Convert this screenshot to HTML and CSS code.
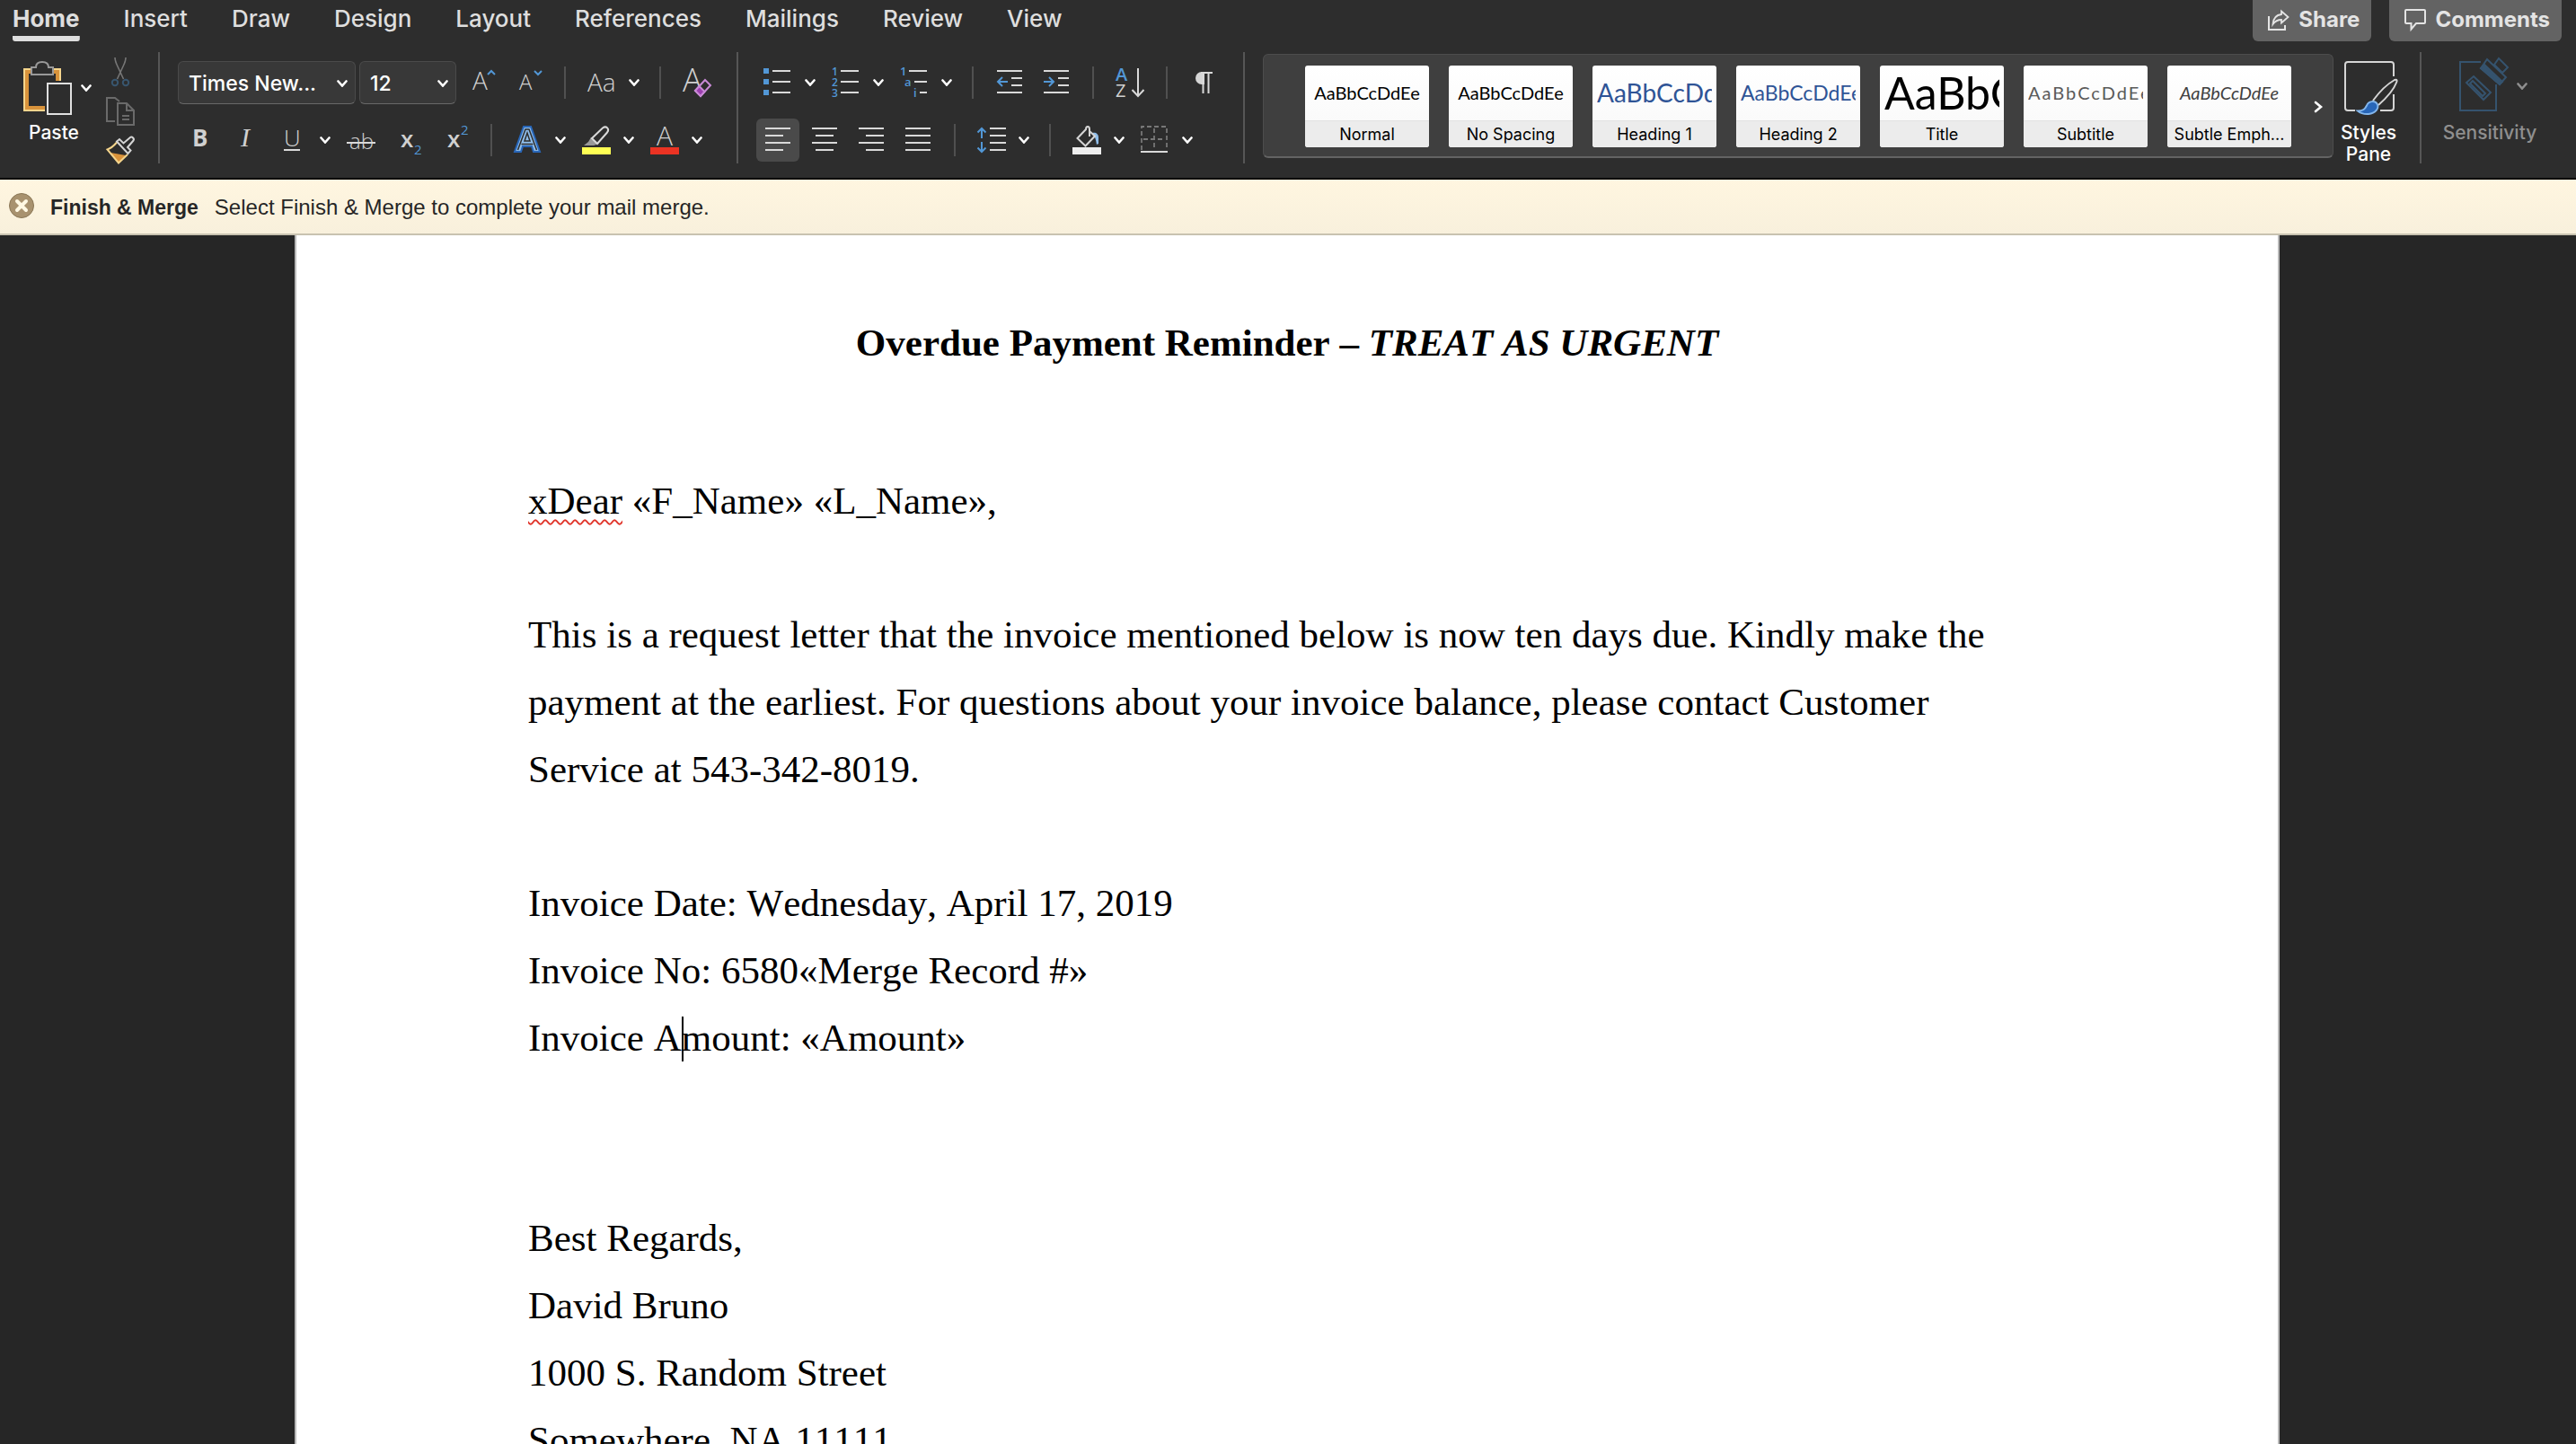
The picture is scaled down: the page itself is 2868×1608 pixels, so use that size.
FILE: index.html
```html
<!DOCTYPE html>
<html lang="en">
<head>
<meta charset="utf-8">
<title>Overdue Payment Reminder</title>
<link rel="stylesheet" href="styles.css">
</head>
<body>
<svg class="defs" aria-hidden="true">
  <symbol id="chev" viewBox="0 0 12 8"><path d="M1.500 1.500 6 6.500l4.500-5" fill="none" stroke="currentColor" stroke-width="2.600" stroke-linecap="round"/></symbol>
</svg>

<header class="ribbon">
  <div class="topbar">
    <nav class="tabs" aria-label="Ribbon tabs">
      <a class="tab active" href="#home">Home</a>
      <a class="tab" href="#insert">Insert</a>
      <a class="tab" href="#draw">Draw</a>
      <a class="tab" href="#design">Design</a>
      <a class="tab" href="#layout">Layout</a>
      <a class="tab" href="#references">References</a>
      <a class="tab" href="#mailings">Mailings</a>
      <a class="tab" href="#review">Review</a>
      <a class="tab" href="#view">View</a>
    </nav>
    <div class="actions">
      <button class="action" type="button">
        <svg width="24" height="24" viewBox="0 0 24 24" fill="none" stroke="currentColor" stroke-width="2"><path d="M1 8v15h18v-5"/><path d="M15 2.500 22.500 9 15 15.500V12C10.500 12 8 13.500 5.500 17 6 10.500 9 6.500 15 6z" stroke-width="1.800"/></svg>
        Share
      </button>
      <button class="action" type="button">
        <svg width="24" height="24" viewBox="0 0 24 24" fill="none" stroke="currentColor" stroke-width="2"><path d="M2 1h20a1 1 0 0 1 1 1v13a1 1 0 0 1-1 1h-9l-5.500 6.500V16H2a1 1 0 0 1-1-1V2a1 1 0 0 1 1-1z"/></svg>
        Comments
      </button>
    </div>
  </div>

  <div class="tools">
    <section class="group clipboard" aria-label="Clipboard">
      <button class="big paste" type="button">
        <span class="big-icon">
          <svg width="54" height="60" viewBox="0 0 54 60" fill="none">
            <path d="M24 52H4V12h6M32 12h6v10" stroke="#d9933b" stroke-width="4"/>
            <path d="M24 55H1V9h8M33 9h8v13" stroke="#f5d58c" stroke-width="2"/>
            <path d="M9 15h24V7h-5c0-4-3-6-7-6s-7 2-7 6H9z" stroke="#999" stroke-width="2" fill="#2d2d2d"/>
            <path d="M27 25h26v34H27z" stroke="#e0e0e0" stroke-width="2" fill="#2d2d2d"/>
          </svg>
          <svg class="chev" width="12" height="8"><use href="#chev"/></svg>
        </span>
        <span class="paste-label">Paste</span>
      </button>
      <div class="stack">
        <button type="button" class="icon" aria-label="Cut"><svg width="32" height="32" viewBox="0 0 32 32" fill="none"><path d="M10 0c0 4 1 6 3 10l6.500 14M22 0c0 4-1 6-3 10l-6.500 14" stroke="#777" stroke-width="1.600"/><circle cx="10" cy="28" r="3.200" stroke="#38566f" stroke-width="2"/><circle cx="22" cy="28" r="3.200" stroke="#38566f" stroke-width="2"/></svg></button>
        <button type="button" class="icon" aria-label="Copy"><svg width="32" height="32" viewBox="0 0 32 32" fill="none" stroke="#6a6a6a" stroke-width="2"><path d="M10 27H1V1h9l5 4"/><path d="M13 7h10l8 8v16H13zM23 7v8h8M18 21h8M18 25h8"/></svg></button>
        <button type="button" class="icon" aria-label="Format painter"><svg width="32" height="30" viewBox="0 0 32 30" fill="none"><path d="m5 18 17 3-8 8z" fill="#d9933b"/><path d="M12 6.500C9 10 6 13 1.500 14.500L14 29.500l10-9.500" stroke="#f5d58c" stroke-width="2"/><path d="m12 5.500 3-2.500 4.500 4.500 7.500-6.500c2-1.500 5 1.500 3.500 3.500L24 12l3.500 3.500-3 3.500z" stroke="#d5d5d5" stroke-width="2"/></svg></button>
      </div>
    </section>
    <hr class="rule">

    <section class="group rows" aria-label="Font">
      <div class="row">
        <div class="selects">
          <div class="picker font-picker"><select aria-label="Font"><option>Times New...</option></select><svg class="chev" width="12" height="8"><use href="#chev"/></svg></div>
          <div class="picker size-picker"><select aria-label="Font size"><option>12</option></select><svg class="chev" width="12" height="8"><use href="#chev"/></svg></div>
        </div>
        <div class="cluster sizes">
          <button type="button" class="icon" aria-label="Increase font size"><svg width="26" height="32" viewBox="0 0 26 32"><text x="0" y="24" class="glyph light" font-size="28">A</text><path d="m17 7 4-4 4 4" class="blue-line"/></svg></button>
          <button type="button" class="icon" aria-label="Decrease font size"><svg width="26" height="32" viewBox="0 0 26 32"><text x="0" y="24" class="glyph light" font-size="24">A</text><path d="m17 3 4 4 4-4" class="blue-line"/></svg></button>
        </div>
        <hr class="tick">
        <div class="cluster">
          <button type="button" class="split" aria-label="Change case"><svg width="32" height="32" viewBox="0 0 32 32"><text x="0" y="26" class="glyph light" font-size="28">Aa</text></svg><svg class="chev" width="12" height="8"><use href="#chev"/></svg></button>
        </div>
        <hr class="tick">
        <div class="cluster">
          <button type="button" class="icon" aria-label="Clear formatting"><svg width="32" height="32" viewBox="0 0 32 32"><text x="0" y="26" class="glyph light" font-size="36">A</text><path d="m14 25 11-12 6 6-11 12z" fill="#2d2d2d" stroke="#c98ad6" stroke-width="2"/><path d="m14 25 4.500-5 6 6-4.500 5z" fill="#9c3fb0" stroke="#c98ad6" stroke-width="2"/></svg></button>
        </div>
      </div>
      <div class="row inset">
        <div class="cluster">
          <button type="button" class="icon" aria-label="Bold"><svg width="32" height="32" viewBox="0 0 32 32"><text x="8" y="23" class="glyph" font-size="26" font-weight="700">B</text></svg></button>
          <button type="button" class="icon" aria-label="Italic"><svg width="32" height="32" viewBox="0 0 32 32"><text x="10" y="23" class="glyph serif" font-size="30">I</text></svg></button>
          <button type="button" class="split" aria-label="Underline"><svg width="32" height="32" viewBox="0 0 32 32"><text x="6" y="23" class="glyph light" font-size="26">U</text><path d="M6 27h18" class="line"/></svg><svg class="chev" width="12" height="8"><use href="#chev"/></svg></button>
          <button type="button" class="icon" aria-label="Strikethrough"><svg width="32" height="32" viewBox="0 0 32 32"><text x="3" y="26" class="glyph light" font-size="24">ab</text><path d="M0 19h32" class="line"/></svg></button>
          <button type="button" class="icon" aria-label="Subscript"><svg width="32" height="32" viewBox="0 0 32 32"><text x="8" y="24" class="glyph" font-size="26" font-weight="600">x</text><text x="23" y="32" class="glyph blue" font-size="15">2</text></svg></button>
          <button type="button" class="icon" aria-label="Superscript"><svg width="32" height="32" viewBox="0 0 32 32"><text x="8" y="24" class="glyph" font-size="26" font-weight="600">x</text><text x="23" y="10" class="glyph blue" font-size="15">2</text></svg></button>
        </div>
        <hr class="tick">
        <div class="cluster">
          <button type="button" class="split" aria-label="Text effects"><svg width="32" height="32" viewBox="0 0 32 32" fill="none"><path d="M1 29 11 1h8l10 28h-7l-2-6H10l-2 6z" fill="#8fbdea" stroke="#2866b8" stroke-width="2"/><path d="M4.500 27 13 4h4l8.500 23M8.500 20.500h13M12 17l3-9 3 9z" stroke="#2d2d2d" stroke-width="1.500"/></svg><svg class="chev" width="12" height="8"><use href="#chev"/></svg></button>
          <button type="button" class="split" aria-label="Highlight"><svg width="32" height="32" viewBox="0 0 32 32"><path d="M0 24h32v8H0z" fill="#ffff54"/><path d="m10 13 9 7-6 2H2l5-4z" fill="#999"/><path d="M11 14 23 2.500c4-3 8 1 5 5L17 20z" fill="#2d2d2d" stroke="#d9d9d9" stroke-width="2"/></svg><svg class="chev" width="12" height="8"><use href="#chev"/></svg></button>
          <button type="button" class="split" aria-label="Font color"><svg width="32" height="32" viewBox="0 0 32 32"><path d="M0 24h32v8H0z" fill="#eb3323"/><text x="16" y="22" class="glyph light" font-size="30" text-anchor="middle">A</text></svg><svg class="chev" width="12" height="8"><use href="#chev"/></svg></button>
        </div>
      </div>
    </section>
    <hr class="rule">

    <section class="group rows" aria-label="Paragraph">
      <div class="row inset">
        <div class="cluster">
          <button type="button" class="split" aria-label="Bullets"><svg width="32" height="32" viewBox="0 0 32 32"><path d="M0 0h6v6H0zM0 12h6v6H0zM0 24h6v6H0z" fill="#5297d6"/><path d="M10 3h20M10 15h20M10 27h20" class="line"/></svg><svg class="chev" width="12" height="8"><use href="#chev"/></svg></button>
          <button type="button" class="split" aria-label="Numbering"><svg width="32" height="32" viewBox="0 0 32 32"><g class="glyph blue" font-size="12" font-weight="600"><text x="0" y="8">1</text><text x="0" y="20">2</text><text x="0" y="32">3</text></g><path d="M10 3h20M10 15h20M10 27h20" class="line"/></svg><svg class="chev" width="12" height="8"><use href="#chev"/></svg></button>
          <button type="button" class="split" aria-label="Multilevel list"><svg width="32" height="32" viewBox="0 0 32 32"><g class="glyph blue" font-size="13" font-weight="600"><text x="0" y="8">1</text><text x="5" y="20">a</text><text x="15" y="32">i</text></g><path d="M10 3h20M16 15h14M22 27h8" class="line"/></svg><svg class="chev" width="12" height="8"><use href="#chev"/></svg></button>
        </div>
        <hr class="tick">
        <div class="cluster">
          <button type="button" class="icon" aria-label="Decrease indent"><svg width="32" height="32" viewBox="0 0 32 32"><path d="M2 3h28M18 11h12M18 19h12M2 27h28" class="line"/><path d="M14 15H3M8 10l-5 5 5 5" class="blue-line"/></svg></button>
          <button type="button" class="icon" aria-label="Increase indent"><svg width="32" height="32" viewBox="0 0 32 32"><path d="M2 3h28M18 11h12M18 19h12M2 27h28" class="line"/><path d="M2 15h11M8 10l5 5-5 5" class="blue-line"/></svg></button>
        </div>
        <hr class="tick">
        <div class="cluster">
          <button type="button" class="icon" aria-label="Sort"><svg width="32" height="32" viewBox="0 0 32 32"><text x="0" y="14" class="glyph blue" font-size="20" font-weight="600">A</text><text x="0" y="32" class="glyph" font-size="20">Z</text><path d="M25 0v30M18.500 24l6.500 7 6.500-7" class="line"/></svg></button>
        </div>
        <hr class="tick">
        <div class="cluster">
          <button type="button" class="icon" aria-label="Show paragraph marks"><svg width="32" height="32" viewBox="0 0 32 32"><path d="M14 4a7 7 0 0 0 0 14z" fill="#d5d5d5"/><path d="M14 4h3v14h-3z" fill="#d5d5d5"/><path d="M13 5h13M15.500 5v23M21.500 5v23" class="line"/></svg></button>
        </div>
      </div>
      <div class="row">
        <div class="segments">
          <button type="button" class="segment on" aria-label="Align left"><svg width="28" height="32" viewBox="0 0 28 32"><path d="M0 3h28M0 11h20M0 19h28M0 27h20" class="line"/></svg></button>
          <button type="button" class="segment" aria-label="Align center"><svg width="28" height="32" viewBox="0 0 28 32"><path d="M0 3h28M4 11h20M0 19h28M4 27h20" class="line"/></svg></button>
          <button type="button" class="segment" aria-label="Align right"><svg width="28" height="32" viewBox="0 0 28 32"><path d="M0 3h28M8 11h20M0 19h28M8 27h20" class="line"/></svg></button>
          <button type="button" class="segment" aria-label="Justify"><svg width="28" height="32" viewBox="0 0 28 32"><path d="M0 3h28M0 11h28M0 19h28M0 27h28" class="line"/></svg></button>
        </div>
        <hr class="tick">
        <div class="cluster">
          <button type="button" class="split" aria-label="Line spacing"><svg width="32" height="32" viewBox="0 0 32 32"><path d="M14 3h18M14 11h18M14 19h18M14 27h18" class="line"/><path d="M5 14V3M.500 7.500 5 3l4.500 4.500M5 18v11M.500 24.500 5 29l4.500-4.500" class="blue-line"/></svg><svg class="chev" width="12" height="8"><use href="#chev"/></svg></button>
        </div>
        <hr class="tick">
        <div class="cluster">
          <button type="button" class="split" aria-label="Shading"><svg width="32" height="32" viewBox="0 0 32 32" fill="none"><path d="M0 24h32v8H0z" fill="#eee"/><path d="M22 8c4-1 7 1 7 5v7l-2 1c-1-5-1-8-4-10z" fill="#8fbdea"/><path d="M19 12V4c0-4-4-4-4 0L5.500 14l9 8.500L25 11.500 19 6" stroke="#d5d5d5" stroke-width="2"/></svg><svg class="chev" width="12" height="8"><use href="#chev"/></svg></button>
          <button type="button" class="split" aria-label="Borders"><svg width="32" height="32" viewBox="0 0 32 32" fill="none"><path d="M1 27V1h28v26M15 3v22M3 15h24" stroke="#777" stroke-width="1.800" stroke-dasharray="5 3"/><path d="M0 29h30" class="line"/></svg><svg class="chev" width="12" height="8"><use href="#chev"/></svg></button>
        </div>
      </div>
    </section>
    <hr class="rule">

    <section class="gallery" aria-label="Styles">
      <div class="cards">
        <button type="button" class="card"><span class="sample">AaBbCcDdEe</span><span class="name">Normal</span></button>
        <button type="button" class="card"><span class="sample">AaBbCcDdEe</span><span class="name">No Spacing</span></button>
        <button type="button" class="card"><span class="sample heading1">AaBbCcDdEe</span><span class="name">Heading 1</span></button>
        <button type="button" class="card"><span class="sample heading2">AaBbCcDdEe</span><span class="name">Heading 2</span></button>
        <button type="button" class="card"><span class="sample title">AaBbCcDdEe</span><span class="name">Title</span></button>
        <button type="button" class="card"><span class="sample subtitle">AaBbCcDdEe</span><span class="name">Subtitle</span></button>
        <button type="button" class="card"><span class="sample emphasis">AaBbCcDdEe</span><span class="name">Subtle Emph...</span></button>
      </div>
      <button type="button" class="icon more" aria-label="More styles"><svg width="10" height="14" viewBox="0 0 10 14"><path d="m2 2 6 5-6 5" fill="none" stroke="#fff" stroke-width="2.600" stroke-linecap="round"/></svg></button>
    </section>

    <button class="big styles-pane" type="button">
      <svg width="66" height="60" viewBox="-6 0 66 60" fill="none">
        <path d="M55 17V4a3 3 0 0 0-3-3H4a3 3 0 0 0-3 3v48a3 3 0 0 0 3 3h8M40 55h12a3 3 0 0 0 3-3V37" stroke="#d5d5d5" stroke-width="2"/>
        <path d="M32 44C40 33 49 25 56 21c3-1 3 1 2 3-3 8-11 17-20 25" stroke="#d5d5d5" stroke-width="2"/>
        <path d="M15 55.500c6 0 8-2 10-6 2-5 9-6 11.500-2 3 5-2 11-9.500 11.500-5 .500-9-1-12-3.500z" fill="#2866b8" stroke="#83b6ec" stroke-width="2"/>
      </svg>
      <span>Styles<br>Pane</span>
    </button>
    <hr class="rule">
    <button class="big sensitivity" type="button" disabled>
      <span class="big-icon">
        <svg width="62" height="64" viewBox="-8 0 62 64" fill="none" stroke="#35536e" stroke-width="2">
          <path d="M24 5H1v54h40V30"/>
          <path d="m16 21 19 18-8 8L8 28z" fill="#2d2d2d"/><path d="m15 26 14 14-3 3-14-14z"/>
          <path d="m31 2 21 20-7 8-21-18z" fill="#2d2d2d"/><path d="m24 12 4-4 20 19-3 3z" fill="#35536e"/>
          <path d="m39 8 5-7 10 10-6 6z"/>
        </svg>
        <svg class="chev" width="12" height="8"><use href="#chev"/></svg>
      </span>
      <span>Sensitivity</span>
    </button>
  </div>
</header>

<aside class="notice">
  <button type="button" class="icon close" aria-label="Close"><svg width="28" height="28" viewBox="0 0 28 28"><circle cx="14" cy="14" r="13.500" fill="#a8926f" stroke="#8a7757"/><path d="m9 9 10 10M19 9 9 19" stroke="#fff8e3" stroke-width="4" stroke-linecap="round"/></svg></button>
  <strong>Finish &amp; Merge</strong>
  <span>Select Finish &amp; Merge to complete your mail merge.</span>
</aside>

<main class="canvas">
  <article class="page">
    <h1>Overdue Payment Reminder – <em>TREAT AS URGENT</em></h1>
    <p class="greeting"><span class="misspelt">xDear</span> «F_Name» «L_Name»,</p>
    <p>This is a request letter that the invoice mentioned below is now ten days due. Kindly make the payment at the earliest. For questions about your invoice balance, please contact Customer Service at 543-342-8019.</p>
    <p>Invoice Date: Wednesday, April 17, 2019<br>Invoice No: 6580«Merge Record #»<br>Invoice A<span class="caret"></span>mount: «Amount»</p>
    <p class="signature">Best Regards,<br>David Bruno<br>1000 S. Random Street<br>Somewhere, NA 11111</p>
  </article>
</main>
</body>
</html>
```

FILE: styles.css
```css
* { box-sizing: border-box; }

body {
  margin: 0;
  height: 100vh;
  display: flex;
  flex-direction: column;
  overflow: hidden;
  background: #262626;
  font-family: Inter, sans-serif;
}

button {
  margin: 0;
  padding: 0;
  border: 0;
  background: none;
  color: inherit;
  font: inherit;
}

svg { display: block; flex: none; overflow: visible; }
hr { margin: 0; border: 0; flex: none; }
.defs { position: absolute; width: 0; height: 0; }

/* Ribbon */
.ribbon {
  flex: none;
  background: #2d2d2d;
  color: #fff;
  border-bottom: 2px solid #000;
}

.topbar {
  display: flex;
  justify-content: space-between;
  height: 58px;
  padding: 0 16px 0 14px;
}

.tabs { display: flex; gap: 49px; }

.tab {
  height: 46px;
  padding-top: 5px;
  color: #dedede;
  font-size: 26px;
  line-height: 32px;
  font-weight: 500;
  text-decoration: none;
}

.tab.active {
  font-weight: 700;
  background: linear-gradient(#dedede, #dedede) bottom / 100% 6px no-repeat;
  border-radius: 3px;
}

.actions { display: flex; gap: 20px; }

.action {
  display: flex;
  align-items: center;
  gap: 10px;
  height: 46px;
  padding: 0 13px 2px 17px;
  border-radius: 0 0 6px 6px;
  background: #636363;
  color: #e4e4e4;
  font-size: 24px;
  line-height: 32px;
  font-weight: 700;
}

.tools { display: flex; padding-bottom: 14px; }
.group { display: flex; padding-top: 10px; }
.rule { width: 2px; height: 124px; background: #565656; }
.tick { width: 2px; height: 36px; background: #505050; }
.chev { color: #fff; }

.clipboard { padding-left: 26px; padding-right: 26px; gap: 16px; }

.big {
  font-size: 21px;
  line-height: 24px;
  font-weight: 500;
  display: flex;
  flex-direction: column;
  gap: 8px;
}

.big-icon { display: flex; align-items: center; gap: 10px; }
.paste { align-items: flex-start; }
.paste-label { width: 68px; }
.stack { display: flex; flex-direction: column; gap: 12px; margin-top: -4px; }
.icon { display: block; }

.rows { flex-direction: column; gap: 16px; padding-left: 20px; padding-right: 28px; }
.row { display: flex; align-items: center; height: 48px; gap: 24px; }
.row.inset { padding-left: 8px; }
.cluster { display: flex; gap: 20px; }
.split { display: flex; align-items: center; gap: 14px; margin-right: -2px; }

.selects { display: flex; gap: 4px; }
.sizes { gap: 26px; margin-left: -6px; }
.picker { position: relative; height: 48px; }
.font-picker { width: 198px; }
.size-picker { width: 108px; }

.picker select {
  appearance: none;
  width: 100%;
  height: 100%;
  padding: 2px 0 0 11px;
  border: 1px solid #4a4a4a;
  border-bottom-color: #686868;
  border-radius: 6px;
  background: #383838;
  color: #fff;
  font: 500 23px Inter, sans-serif;
}

.picker .chev { position: absolute; right: 9px; top: 21px; pointer-events: none; }

.glyph { font-family: "Open Sans", sans-serif; fill: #d0d0d0; }
.glyph.light { font-weight: 300; }
.glyph.serif { font-family: "Liberation Serif", serif; font-style: italic; }
.glyph.blue { fill: #5297d6; }
.line { fill: none; stroke: #d9d9d9; stroke-width: 2px; }
.blue-line { fill: none; stroke: #5297d6; stroke-width: 2px; }

.segments { display: flex; gap: 4px; margin-right: -8px; }
.segment { display: flex; align-items: center; justify-content: center; width: 48px; height: 48px; border-radius: 6px; }
.segment.on { background: #4a4a4a; }

/* Style gallery */
.gallery {
  flex: 1;
  display: flex;
  align-items: center;
  height: 116px;
  margin: 2px 0 0 20px;
  padding: 2px 11px 0 46px;
  border: 1px solid #4d4d4d;
  border-bottom: 2px solid #636363;
  border-radius: 6px;
  background: #3f3f3f;
}

.cards { flex: 1; display: grid; grid-template-columns: repeat(7, 1fr); gap: 22px; }

.card {
  min-width: 0;
  height: 91px;
  display: flex;
  flex-direction: column;
  overflow: hidden;
  border-radius: 3px;
  background: linear-gradient(#fff, #f8f8f8);
  color: #000;
}

.sample {
  align-self: stretch;
  height: 61px;
  margin: 0 5px;
  overflow: hidden;
  font: 400 20px/60px Lato, sans-serif;
  white-space: nowrap;
}

.heading1 { color: #2f5496; font-size: 28px; text-align: left; }
.heading2 { color: #2f5496; font-size: 23px; text-align: left; }
.title { font-size: 50px; text-align: left; }
.subtitle { color: #5a5a5a; letter-spacing: 2px; text-align: left; }
.emphasis { color: #404040; font-style: italic; }

.name {
  align-self: stretch;
  height: 30px;
  border-top: 1px solid #e2e2e2;
  background: #ececec;
  font-size: 18px;
  line-height: 30px;
  font-weight: 400;
  white-space: nowrap;
}

.more { margin-left: 25px; }
.styles-pane { align-items: center; width: 78px; margin: 10px 18px 0 0; }
.sensitivity { align-items: center; width: 172px; padding: 6px 20px 0 0; color: #8f8f8f; }
.sensitivity .chev { color: #8f8f8f; }

/* Mail merge notice */
.notice {
  flex: none;
  display: flex;
  align-items: center;
  gap: 18px;
  height: 62px;
  padding: 2px 10px 0;
  border-bottom: 2px solid #c8c2b0;
  background: linear-gradient(#fff6e0, #f8f0dc);
  color: #262626;
  font: 24px "Liberation Sans", sans-serif;
}

.notice strong { font-size: 23px; }
.close { padding-bottom: 4px; }

/* Document */
.canvas { flex: 1; min-height: 0; overflow: hidden; padding: 0 332px 0 330px; }

.page {
  height: 100%;
  padding: 82px 258px 0;
  background: #fff;
  box-shadow: 0 0 0 2px #b8b8b8;
  color: #000;
  font: 43px/75px "Liberation Serif", serif;
  font-kerning: none;
}

.page h1 { margin: 0; font-size: 43px; text-align: center; }
.page p { margin: 0 0 74px; }
.page .greeting { margin-top: 101px; }
.page .signature { margin-top: 148px; }
.misspelt { text-decoration: underline wavy #e0352b 2px; text-underline-offset: 6px; }

.caret { position: relative; }
.caret::after { content: ""; position: absolute; left: 0; top: 0; width: 2px; height: 50px; background: #000; }
```
